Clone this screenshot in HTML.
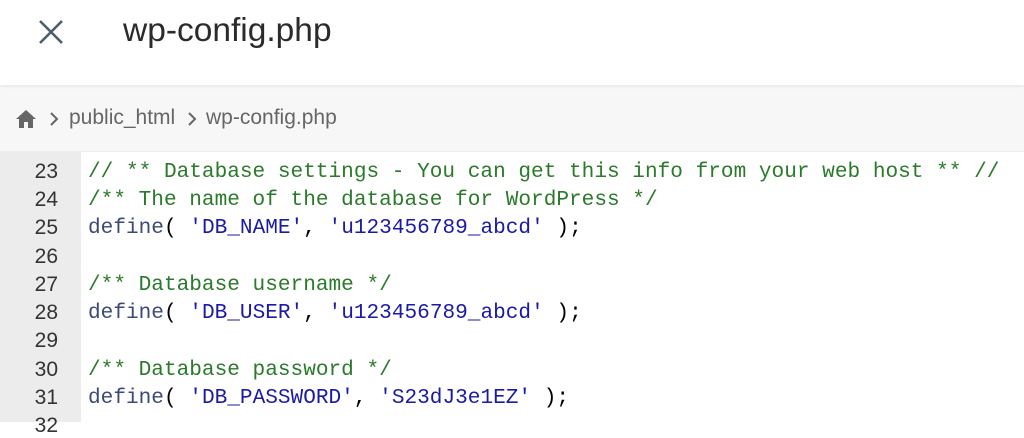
<!DOCTYPE html>
<html><head><style>
*{margin:0;padding:0;box-sizing:border-box}
body{width:1024px;height:422px;overflow:hidden;background:#fff;font-family:"Liberation Sans",sans-serif;position:relative}
.hdr{position:absolute;left:0;top:0;width:1024px;height:85px;background:#fff;box-shadow:0 1px 4px rgba(0,0,0,.08);z-index:2}
.title{position:absolute;left:123px;top:12px;font-size:33.5px;color:#2b2b2b}
.bc{position:absolute;left:0;top:85px;width:1024px;height:67px;background:#f7f7f7;border-bottom:1px solid #eee}
.bct{position:absolute;left:69px;top:106px;font-size:21px;color:#666}
.gut{position:absolute;left:0;top:152px;width:81px;height:270px;background:#ececec}
.ln{position:absolute;left:0;width:58px;text-align:right;font-size:21px;color:#333;font-family:"Liberation Sans",sans-serif}
.cl{position:absolute;left:88px;font-family:"Liberation Mono",monospace;font-size:21.1px;white-space:pre;color:#000}
.c{color:#2a7a2a}.d{color:#3b4a78}.s{color:#1a1aa6}
</style></head><body>
<div class="hdr">
<svg style="position:absolute;left:38px;top:19px" width="26" height="26" viewBox="0 0 26 26"><path d="M2 2L24 24M24 2L2 24" stroke="#4a5f6a" stroke-width="2.6"/></svg>
<div class="title">wp-config.php</div>
</div>
<div class="bc"></div>
<svg style="position:absolute;left:15px;top:109px" width="22" height="20" viewBox="0 0 22 20"><path d="M11 1L1 10h3v9h5v-6h4v6h5v-9h3z" fill="#666"/></svg>
<svg style="position:absolute;left:49px;top:111px" width="10" height="16" viewBox="0 0 10 16"><path d="M2 2l6 6-6 6" stroke="#666" stroke-width="2" fill="none"/></svg>
<div class="bct">public_html</div>
<svg style="position:absolute;left:187px;top:111px" width="10" height="16" viewBox="0 0 10 16"><path d="M2 2l6 6-6 6" stroke="#666" stroke-width="2" fill="none"/></svg>
<div class="bct" style="left:206px">wp-config.php</div>
<div class="gut"></div>
<div class="ln" style="top:160px">23</div>
<div class="ln" style="top:188px">24</div>
<div class="ln" style="top:216px">25</div>
<div class="ln" style="top:245px">26</div>
<div class="ln" style="top:273px">27</div>
<div class="ln" style="top:301px">28</div>
<div class="ln" style="top:329px">29</div>
<div class="ln" style="top:358px">30</div>
<div class="ln" style="top:386px">31</div>
<div class="ln" style="top:414px">32</div>
<div class="cl c" style="top:160px">// ** Database settings - You can get this info from your web host ** //</div>
<div class="cl c" style="top:188px">/** The name of the database for WordPress */</div>
<div class="cl" style="top:216px"><span class="d">define</span>( <span class="s">'DB_NAME'</span>, <span class="s">'u123456789_abcd'</span> );</div>
<div class="cl c" style="top:273px">/** Database username */</div>
<div class="cl" style="top:301px"><span class="d">define</span>( <span class="s">'DB_USER'</span>, <span class="s">'u123456789_abcd'</span> );</div>
<div class="cl c" style="top:358px">/** Database password */</div>
<div class="cl" style="top:386px"><span class="d">define</span>( <span class="s">'DB_PASSWORD'</span>, <span class="s">'S23dJ3e1EZ'</span> );</div>
</body></html>
